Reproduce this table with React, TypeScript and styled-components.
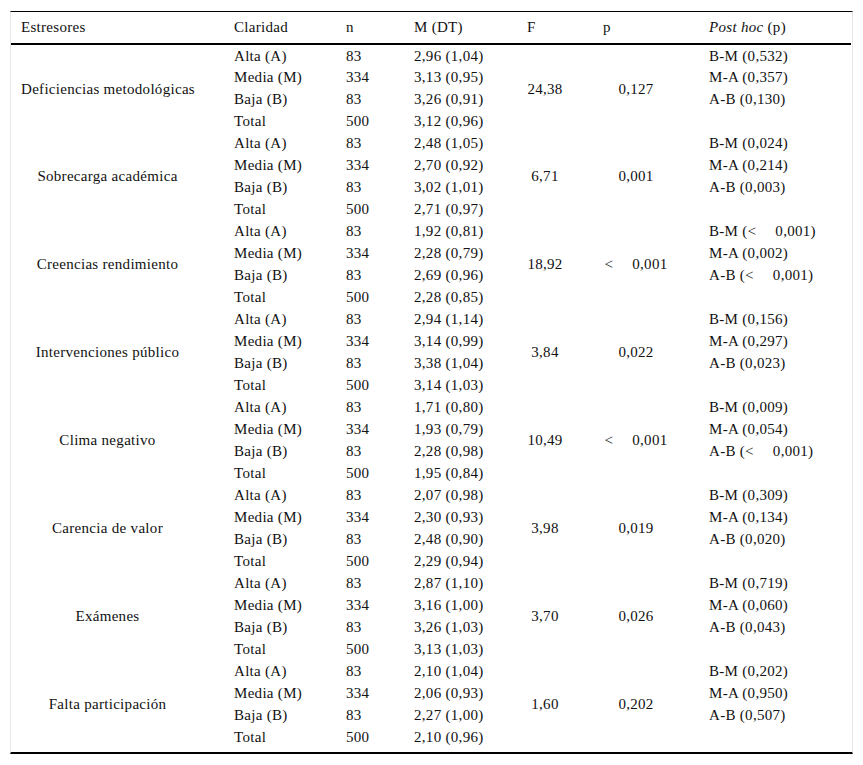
import type { FC } from 'react'
import styled, { createGlobalStyle } from 'styled-components'

type Group = {
	name: string
	f: string
	p: string
	post: string[]
}

const levels = ['Alta (A)', 'Media (M)', 'Baja (B)', 'Total']
const ns = ['83', '334', '83', '500']

const groups: Group[] = [
	{ name: 'Deficiencias metodológicas', f: '24,38', p: '0,127', post: ['B-M (0,532)', 'M-A (0,357)', 'A-B (0,130)'] },
	{ name: 'Sobrecarga académica', f: '6,71', p: '0,001', post: ['B-M (0,024)', 'M-A (0,214)', 'A-B (0,003)'] },
	{ name: 'Creencias rendimiento', f: '18,92', p: '<0,001', post: ['B-M (<0,001)', 'M-A (0,002)', 'A-B (<0,001)'] },
	{ name: 'Intervenciones público', f: '3,84', p: '0,022', post: ['B-M (0,156)', 'M-A (0,297)', 'A-B (0,023)'] },
	{ name: 'Clima negativo', f: '10,49', p: '<0,001', post: ['B-M (0,009)', 'M-A (0,054)', 'A-B (<0,001)'] },
	{ name: 'Carencia de valor', f: '3,98', p: '0,019', post: ['B-M (0,309)', 'M-A (0,134)', 'A-B (0,020)'] },
	{ name: 'Exámenes', f: '3,70', p: '0,026', post: ['B-M (0,719)', 'M-A (0,060)', 'A-B (0,043)'] },
	{ name: 'Falta participación', f: '1,60', p: '0,202', post: ['B-M (0,202)', 'M-A (0,950)', 'A-B (0,507)'] },
]

const means: string[][] = [
	['2,96 (1,04)', '3,13 (0,95)', '3,26 (0,91)', '3,12 (0,96)'],
	['2,48 (1,05)', '2,70 (0,92)', '3,02 (1,01)', '2,71 (0,97)'],
	['1,92 (0,81)', '2,28 (0,79)', '2,69 (0,96)', '2,28 (0,85)'],
	['2,94 (1,14)', '3,14 (0,99)', '3,38 (1,04)', '3,14 (1,03)'],
	['1,71 (0,80)', '1,93 (0,79)', '2,28 (0,98)', '1,95 (0,84)'],
	['2,07 (0,98)', '2,30 (0,93)', '2,48 (0,90)', '2,29 (0,94)'],
	['2,87 (1,10)', '3,16 (1,00)', '3,26 (1,03)', '3,13 (1,03)'],
	['2,10 (1,04)', '2,06 (0,93)', '2,27 (1,00)', '2,10 (0,96)'],
]

const colWidths = [213, 112, 68, 113, 76, 106, 152]

// "<0,001" -> "<" + gap + "0,001", as in the printed table
const Less: FC<{ text: string }> = ({ text }) => {
	const i = text.indexOf('<')
	if (i < 0) return <>{text}</>
	return (
		<>
			{text.slice(0, i + 1)}
			<Gap />
			{text.slice(i + 1)}
		</>
	)
}

const App: FC = () => {
	return (
		<>
			<Global />
			<Page>
				<Frame>
					<Table>
						<colgroup>
							{colWidths.map((w, i) => (
								<col key={i} style={{ width: w }} />
							))}
						</colgroup>
						<thead>
							<HeadRow>
								<Th>Estresores</Th>
								<Th>Claridad</Th>
								<Th>n</Th>
								<Th>M (DT)</Th>
								<Th>F</Th>
								<Th>p</Th>
								<Th>
									<em>Post hoc</em> (p)
								</Th>
							</HeadRow>
						</thead>
						<tbody>
							{groups.map((g, gi) =>
								levels.map((lv, ri) => (
									<Row key={`${gi}-${ri}`}>
										{ri === 0 && (
											<Td rowSpan={4} $center>
												{g.name}
											</Td>
										)}
										<Td>{lv}</Td>
										<Td>{ns[ri]}</Td>
										<Td>{means[gi][ri]}</Td>
										{ri === 0 && (
											<>
												<Td rowSpan={4} $center>
													{g.f}
												</Td>
												<Td rowSpan={4} $center>
													<Less text={g.p} />
												</Td>
											</>
										)}
										<Td>{g.post[ri] ? <Less text={g.post[ri]} /> : ''}</Td>
									</Row>
								))
							)}
						</tbody>
					</Table>
				</Frame>
			</Page>
		</>
	)
}

const Global = createGlobalStyle`
	body {
		margin: 0;
		background: #fff;
		font-family: 'Liberation Serif', 'Times New Roman', serif;
		color: #111;
	}
`

const Page = styled.div`
	padding: 11px 10px 12px 10px;
	width: 843px;
`

const Frame = styled.div`
	border-top: 1px solid #000;
	border-left: 1px solid #e6e6e6;
	border-right: 1px solid #e6e6e6;
	border-bottom: 2px solid #000;
	padding-bottom: 4px;
`

const Table = styled.table`
	width: 840px;
	table-layout: fixed;
	border-collapse: collapse;
	font-family: 'Liberation Serif', 'Times New Roman', serif;
	font-size: 15px;
	letter-spacing: 0.3px;
	color: #111;
`

const HeadRow = styled.tr`
	height: 32px;
	border-bottom: 2px solid #000;
`

const Th = styled.th`
	text-align: left;
	font-weight: normal;
	padding: 0 10px 0 10px;
	white-space: nowrap;
`

const Row = styled.tr`
	height: 22px;
`

const Td = styled.td<{ $center?: boolean }>`
	padding: 0 ${(p) => (p.$center ? '30px' : '10px')} 0 10px;
	text-align: ${(p) => (p.$center ? 'center' : 'left')};
	vertical-align: middle;
	white-space: nowrap;
	line-height: 16px;
`

const Gap = styled.span`
	display: inline-block;
	width: 19px;
`

export default App
